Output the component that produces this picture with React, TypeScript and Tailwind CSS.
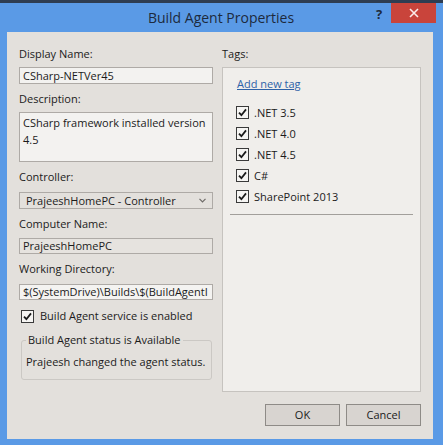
import React from "react";

const font = { fontFamily: '"Open Sans", "Noto Sans", Arial, sans-serif' };

function Check() {
  return (
    <span className="flex h-[13px] w-[13px] shrink-0 items-center justify-center border border-[#3a3a3a] bg-[#f6f5f3]">
      <svg width="9" height="9" viewBox="0 0 9 9">
        <path d="M1 4.6 L3.4 7.2 L8 1.4" fill="none" stroke="#1a1a1a" strokeWidth="1.8" />
      </svg>
    </span>
  );
}

function Label({ children }: { children: React.ReactNode }) {
  return <div className="h-[16px] text-[11px] leading-[16px] text-[#1b1b1b]">{children}</div>;
}

export default function App() {
  const tags = [".NET 3.5", ".NET 4.0", ".NET 4.5", "C#", "SharePoint 2013"];
  return (
    <div
      className="flex h-[445px] w-[443px] flex-col overflow-hidden border-t-[3px] border-[#2e3d52] bg-[#5a9ae6]"
      style={font}
    >
      {/* title bar */}
      <div className="flex h-[29px] items-start">
        <div className="flex-1 pt-[2px] pl-[66px] text-center text-[14px] leading-[25px] text-[#1d2a3d]">
          Build Agent Properties
        </div>
        <div className="w-[15px] pt-[3px] text-[13px] font-bold leading-[16px] text-[#1d2a3d]">?</div>
        <div className="mr-[7px] flex h-[20px] w-[45px] items-center justify-center bg-[#c9443b]">
          <svg width="10" height="10" viewBox="0 0 10 10">
            <path d="M1 1 L9 9 M9 1 L1 9" stroke="#fbecea" strokeWidth="1.6" />
          </svg>
        </div>
      </div>

      {/* client area */}
      <div className="ml-[7px] mr-[10px] flex h-[407px] flex-col bg-[#e3e0dc] px-[12px] text-[11px] text-[#1b1b1b]">
        <div className="flex gap-[9px] pt-[14px]">
          {/* left column */}
          <div className="flex w-[195px] flex-col">
            <Label>Display Name:</Label>
            <div className="mt-[5px] h-[17px] border border-[#aeaaa6] bg-[#f3f2f0] pl-[3px] leading-[15px]">
              CSharp-NETVer45
            </div>
            <div className="mt-[7px]">
              <Label>Description:</Label>
            </div>
            <div className="mt-[5px] h-[50px] border border-[#aeaaa6] bg-[#f3f2f0] pt-[1px] pl-[3px] leading-[17px]">
              CSharp framework installed version
              <br />
              4.5
            </div>
            <div className="mt-[7px]">
              <Label>Controller:</Label>
            </div>
            <div className="mt-[7px] flex h-[17px] items-center border border-[#aeaaa6] bg-[#e3e0dc] pr-[6px] pl-[6px]">
              <span className="flex-1 leading-[15px]">PrajeeshHomePC - Controller</span>
              <svg width="7" height="5" viewBox="0 0 7 5">
                <path d="M0.5 0.8 L3.5 3.8 L6.5 0.8" fill="none" stroke="#6d6a67" strokeWidth="1.2" />
              </svg>
            </div>
            <div className="mt-[7px]">
              <Label>Computer Name:</Label>
            </div>
            <div className="mt-[6px] h-[16px] border border-[#aeaaa6] bg-[#e6e3df] pl-[3px] leading-[14px]">
              PrajeeshHomePC
            </div>
            <div className="mt-[7px]">
              <Label>Working Directory:</Label>
            </div>
            <div className="mt-[7px] h-[16px] overflow-hidden border border-[#aeaaa6] bg-[#f4f3f1] pl-[3px] leading-[14px] whitespace-nowrap">
              $(SystemDrive)\Builds\$(BuildAgentI
            </div>
            <div className="mt-[9px] flex h-[14px] items-center gap-[6px] pl-[2px]">
              <Check />
              <span className="leading-[14px]">Build Agent service is enabled</span>
            </div>
            <div className="mt-[17px] ml-[2px] mr-[1px] h-[40px] rounded-[3px] border border-[#cbc8c4] pl-[4px]">
              <div className="-mt-[9px] w-fit bg-[#e3e0dc] pr-[3px] pl-[2px] leading-[16px]">
                Build Agent status is Available
              </div>
              <div className="mt-[6px] leading-[16px]">Prajeesh changed the agent status.</div>
            </div>
          </div>

          {/* right column */}
          <div className="flex flex-1 flex-col">
            <Label>Tags:</Label>
            <div className="mt-[5px] h-[325px] w-[199px] border border-[#c6c3bf] bg-[#f0eeeb] px-[7px]">
              <div className="mt-[8px] pl-[7px] leading-[16px] text-[#2e62a8] underline">Add new tag</div>
              <div className="mt-[13px] flex flex-col gap-[6px] pl-[6px]">
                {tags.map((t) => (
                  <div key={t} className="flex h-[15px] items-center gap-[5px]">
                    <Check />
                    <span className="leading-[15px]">{t}</span>
                  </div>
                ))}
              </div>
              <div className="mt-[10px] h-px bg-[#a29f9b]" />
            </div>
          </div>
        </div>

        {/* buttons */}
        <div className="mt-[12px] flex justify-end gap-[6px]">
          <button className="h-[22px] w-[75px] border border-[#8e8b87] bg-[#d8d4d0] text-[11px] text-[#1b1b1b]">
            OK
          </button>
          <button className="h-[22px] w-[75px] border border-[#8e8b87] bg-[#d8d4d0] text-[11px] text-[#1b1b1b]">
            Cancel
          </button>
        </div>
      </div>
    </div>
  );
}
